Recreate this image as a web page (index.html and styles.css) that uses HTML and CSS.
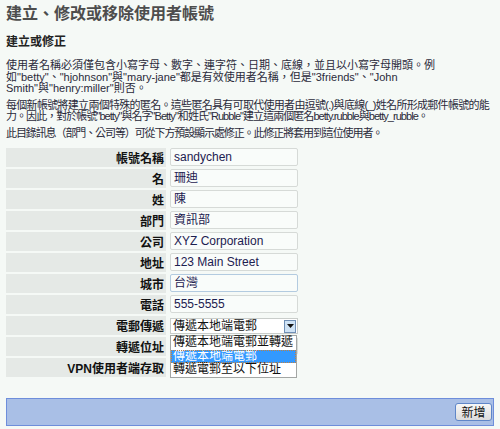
FILE: index.html
```html
<!DOCTYPE html>
<html>
<head>
<meta charset="utf-8">
<link rel="stylesheet" href="styles.css">
</head>
<body>
<div class="page">
  <h1 class="title">建立、修改或移除使用者帳號</h1>
  <h2 class="subtitle">建立或修正</h2>
  <p class="para p1">使用者名稱必須僅包含小寫字母、數字、連字符、日期、底線，並且以小寫字母開頭。例<br>如"betty"、"hjohnson"與"mary-jane"都是有效使用者名稱，但是"3friends"、"John<br>Smith"與"henry:miller"則否。</p>
  <p class="para p2"><span class="l1">每個新帳號將建立兩個特殊的匿名。這些匿名具有可取代使用者由逗號(.)與底線(_)姓名所形成郵件帳號的能</span><br><span class="l2">力。因此，對於帳號"betty"與名字"Betty"和姓氏"Rubble"建立這兩個匿名betty.rubble與betty_rubble。</span></p>
  <p class="para p3">此目錄訊息（部門、公司等）可從下方預設顯示處修正。此修正將套用到這位使用者。</p>

  <table class="form">
    <tr><th>帳號名稱</th><td><div class="field">sandychen</div></td></tr>
    <tr><th>名</th><td><div class="field">珊迪</div></td></tr>
    <tr><th>姓</th><td><div class="field">陳</div></td></tr>
    <tr><th>部門</th><td><div class="field">資訊部</div></td></tr>
    <tr><th>公司</th><td><div class="field">XYZ Corporation</div></td></tr>
    <tr><th>地址</th><td><div class="field">123 Main Street</div></td></tr>
    <tr><th>城市</th><td><div class="field focus">台灣</div></td></tr>
    <tr><th>電話</th><td><div class="field">555-5555</div></td></tr>
    <tr><th>電郵傳遞</th><td>
      <div class="select-wrap">
        <div class="select"><span class="sel-text">傳遞本地端電郵</span><span class="arrow"><svg width="7" height="4" viewBox="0 0 7 4"><path d="M0 0H7L3.5 4Z" fill="#111"/></svg></span></div>
        <ul class="options">
          <li>傳遞本地端電郵並轉遞</li>
          <li class="active">傳遞本地端電郵</li>
          <li>轉遞電郵至以下位址</li>
        </ul>
      </div>
    </td></tr>
    <tr><th>轉遞位址</th><td><div class="field"></div></td></tr>
    <tr><th>VPN使用者端存取</th><td><div class="stub"></div></td></tr>
  </table>

  <div class="bar">
    <button class="btn">新增</button>
  </div>
</div>
</body>
</html>
```

FILE: styles.css
```css
html, body {
  margin: 0;
  padding: 0;
  background: #f5f9f6;
}
body {
  font-family: "Liberation Sans", "Noto Sans CJK TC", sans-serif;
  color: #333;
}
.page {
  padding: 4px 6px 0 6px;
  width: 488px;
}
.title {
  margin: 0;
  font-size: 16px;
  line-height: 20px;
  font-weight: bold;
  color: #4d4d4d;
}
.subtitle {
  margin: 10px 0 0 0;
  font-size: 12px;
  line-height: 16px;
  font-weight: bold;
  color: #222;
}
.para {
  margin: 10px 0 0 0;
  font-size: 11px;
  line-height: 11.5px;
  color: #2a2a3a;
  white-space: nowrap;
}
.para + .para {
  margin-top: 5px;
}
.p2 .l1 {
  letter-spacing: -0.7px;
}
.p2 .l2 {
  letter-spacing: -0.95px;
}
.p3 {
  letter-spacing: -1.1px;
}
.form {
  border-collapse: separate;
  border-spacing: 0 2px;
  margin: 7px 0 0 0;
}
.form th {
  width: 160px;
  height: 19px;
  padding: 0 2px 0 0;
  box-sizing: border-box;
  background: #e5e9e6;
  text-align: right;
  font-size: 12px;
  font-weight: bold;
  color: #111;
  vertical-align: middle;
}
.form td {
  padding: 0 0 0 4px;
  height: 19px;
  vertical-align: top;
}
.field {
  width: 128px;
  height: 18px;
  box-sizing: border-box;
  border: 1px solid #d6dad7;
  border-radius: 2px;
  background: #f9fcfa;
  font-size: 12px;
  line-height: 16px;
  padding: 0 3px;
  color: #1c2050;
  white-space: nowrap;
  overflow: hidden;
}
.field.focus {
  border-color: #b3cbe0;
}
.select-wrap {
  position: relative;
  width: 128px;
}
.select {
  display: flex;
  align-items: center;
  justify-content: space-between;
  height: 16px;
  margin-top: 2px;
  box-sizing: border-box;
  border: 1px solid #c9cdca;
  background: #fff;
  font-size: 12px;
  line-height: 14px;
  padding-left: 2px;
  color: #111;
}
.arrow {
  display: flex;
  align-items: center;
  justify-content: center;
  width: 12px;
  height: 13px;
  margin-right: 1px;
  background: #cfe3f5;
  border: 1px solid #6f8fb5;
  box-sizing: border-box;
}
.options {
  position: absolute;
  left: 0;
  top: 17px;
  width: 127px;
  margin: 0;
  padding: 0;
  list-style: none;
  background: #fff;
  border: 1px solid #a3a6a4;
  box-sizing: border-box;
  z-index: 2;
}
.options li {
  height: 13.5px;
  font-size: 12px;
  line-height: 13px;
  padding-left: 2px;
  color: #111;
  white-space: nowrap;
}
.options li.active {
  background: #3399ff;
  color: #fff;
  outline: 1px dotted #c08040;
  outline-offset: -1px;
}
.stub {
  width: 30px;
  height: 18px;
  border-bottom: 1px solid #c8ccc9;
  box-sizing: border-box;
}
.bar {
  margin-top: 19px;
  height: 28px;
  box-sizing: border-box;
  background: #a9bfe6;
  border: 1px solid #6e8edb;
  display: flex;
  align-items: center;
  justify-content: flex-end;
  padding-right: 1px;
}
.btn {
  width: 37px;
  height: 18px;
  padding: 0;
  font-family: "Noto Sans CJK TC", sans-serif;
  font-size: 12px;
  line-height: 14px;
  color: #111;
  background: linear-gradient(#f7f7f7, #dcdcdc);
  border: 1px solid #5f86c8;
  border-radius: 3px;
}
```
